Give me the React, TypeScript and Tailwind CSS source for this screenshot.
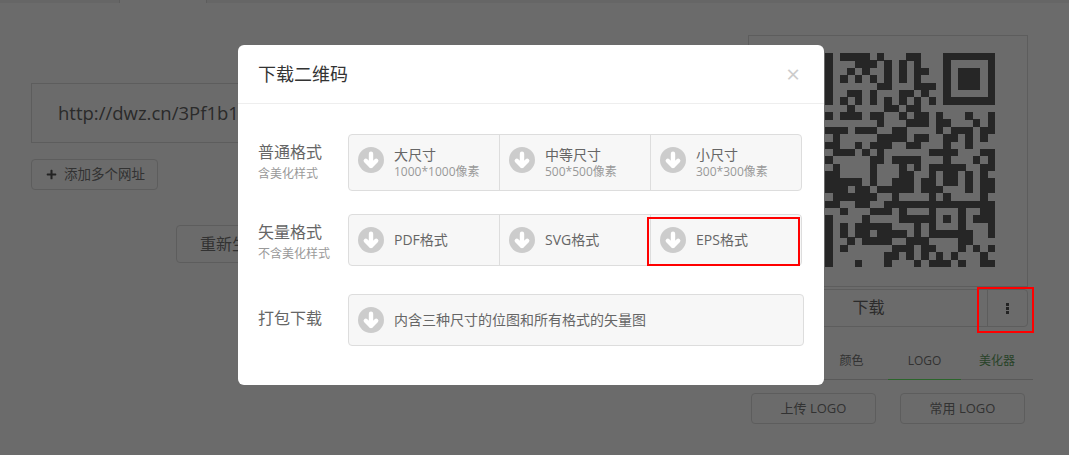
import React from 'react';
import { FaPlus } from 'react-icons/fa';

// qr rows: dark column numbers, the first six columns sit behind the modal
const qrRows: number[][] = [
  [6, 8, 9, 10, 11, 13, 17, 18],
  [6, 10, 11, 12, 14, 16, 18],
  [6, 9, 11, 14, 16, 18, 19],
  [6, 8, 10, 12, 14, 16, 18],
  [6, 13, 14, 18, 19, 20],
  [6, 9, 10, 12, 16, 17, 19],
  [6, 8, 10, 12, 14, 16, 18, 20],
  [9, 14, 15, 17, 18],
  [6, 8, 9, 10, 12, 13, 16, 18, 19, 21, 25, 28],
  [13, 17, 18, 19, 21, 22, 26, 28],
  [6, 7, 8, 10, 11, 12, 15, 16, 21, 23, 24, 25, 27, 28],
  [7, 13, 14, 15, 16, 18, 19, 22, 23, 25, 27],
  [6, 7, 10, 12, 13, 14, 17, 18, 22, 25],
  [7, 8, 9, 11, 13, 20, 21, 22, 23, 27, 28],
  [6, 12, 13, 15, 16, 17, 18, 22, 26, 28],
  [7, 12, 16, 18, 20, 21, 22, 23, 24, 27, 28],
  [6, 7, 12, 16, 17, 20, 22, 23, 25, 27],
  [6, 7, 8, 9, 10, 12, 15, 16, 17, 19, 20, 22, 23, 25, 27, 28],
  [6, 7, 8, 10, 11, 13, 14, 15, 16, 17, 19, 20, 21, 25, 27, 28],
  [7, 8, 9, 10, 11, 12, 15, 20, 22, 27],
  [6, 7, 10, 11, 14, 15, 16, 17, 18, 19, 20, 21, 22, 23, 24, 25, 26, 27, 28],
  [8, 12, 13, 14, 16, 20, 24, 27, 28],
  [6, 11, 16, 17, 18, 19, 20, 22, 24, 26, 27, 28],
  [6, 8, 10, 11, 12, 13, 14, 18, 20, 24, 28],
  [6, 8, 10, 11, 13, 14, 15, 16, 18, 20, 21, 22, 23, 24, 25, 28],
  [6, 9, 11, 12, 13, 14, 17, 18, 19, 24, 25],
  [6, 8, 15, 16, 17, 19, 20, 24, 26, 28],
  [6, 14, 15, 17, 19, 21, 23, 27],
  [6, 10, 14, 18, 20, 21, 22, 24, 27, 28],
];

const QrCode = () => (
  <svg viewBox="0 0 29 29" className="w-[214px] h-[214px]" shapeRendering="crispEdges">
    {qrRows.map((cols, r) =>
      cols.map((c) => <rect key={`${r}-${c}`} x={c} y={r} width={1.02} height={1.02} fill="#5c5c5c" />)
    )}
    {/* top right finder */}
    <path d="M22 0h7v7h-7zM23 1v5h5v-5z" fill="#5c5c5c" fillRule="evenodd" />
    <rect x={24} y={2} width={3} height={3} fill="#5c5c5c" />
  </svg>
);

const DownIcon = () => (
  <svg viewBox="0 0 26 26" className="w-[26px] h-[26px] shrink-0">
    <circle cx="13" cy="13" r="13" fill="#ccc" />
    <path
      d="M13 6.8V19M7.8 13.8L13 19l5.2-5.2"
      fill="none"
      stroke="#fff"
      strokeWidth="4.4"
      strokeLinecap="round"
      strokeLinejoin="round"
    />
  </svg>
);

const Cell = ({ title, sub, last }: { title: string; sub?: string; last?: boolean }) => (
  <div className={`flex-1 flex items-start pl-[9px] pt-3 ${last ? '' : 'border-r border-[#ddd]'}`}>
    <DownIcon />
    <div className={`ml-[10px] flex flex-col ${sub ? '-mt-px' : 'mt-1'}`}>
      <span className="text-sm leading-[18px] text-[#666]">{title}</span>
      {sub && <span className="text-xs leading-4 text-[#999]">{sub}</span>}
    </div>
  </div>
);

const Label = ({ title, sub }: { title: string; sub?: string }) => (
  <div className={`w-[90px] shrink-0 flex flex-col ${sub ? 'pt-[7px]' : 'pt-[13px]'}`}>
    <span className="text-base leading-[22px] text-[#666]">{title}</span>
    {sub && <span className="mt-[2px] text-xs leading-[18px] text-[#999]">{sub}</span>}
  </div>
);

const DownloadModal = () => (
  <div className="absolute left-[238px] top-[45px] w-[586px] h-[340px] bg-white rounded-md">
    <div className="h-[59px] border-b border-[#eee] flex items-center justify-between pl-5 pr-6">
      <h2 className="text-lg text-[#333]">下载二维码</h2>
      <span className="text-[24px] leading-none text-[#ccc]">×</span>
    </div>
    <div className="pl-5 pt-[30px] flex flex-col">
      <div className="flex">
        <Label title="普通格式" sub="含美化样式" />
        <div className="w-[454px] h-[57px] flex bg-[#f7f7f7] border border-[#ddd] rounded">
          <Cell title="大尺寸" sub="1000*1000像素" />
          <Cell title="中等尺寸" sub="500*500像素" />
          <Cell title="小尺寸" sub="300*300像素" last />
        </div>
      </div>
      <div className="flex mt-[23px]">
        <Label title="矢量格式" sub="不含美化样式" />
        <div className="w-[454px] h-[52px] flex bg-[#f7f7f7] border border-[#ddd] rounded">
          <Cell title="PDF格式" />
          <Cell title="SVG格式" />
          <Cell title="EPS格式" last />
        </div>
      </div>
      <div className="flex mt-[28px]">
        <Label title="打包下载" />
        <div className="w-[456px] h-[52px] flex bg-[#f7f7f7] border border-[#ddd] rounded">
          <Cell title="内含三种尺寸的位图和所有格式的矢量图" last />
        </div>
      </div>
    </div>
  </div>
);

export default function App() {
  return (
    <div className="relative w-[1069px] h-[455px] overflow-hidden bg-white font-['Open_Sans','Noto_Sans_CJK_SC',sans-serif]">
      {/* page underneath */}
      <div className="h-[3px] flex bg-[#f2f2f2]">
        <div className="ml-[119px] w-[88px] bg-white border-x border-[#ddd]" />
      </div>
      <div className="flex pl-[31px]">
        <div className="w-[717px] pt-[80px] flex flex-col">
          <div className="w-[660px] h-[60px] border border-[#ddd] flex items-center pl-[26px] text-[18.5px] text-[#666]">
            http://dwz.cn/3Pf1b1
          </div>
          <button className="mt-4 w-[127px] h-[31px] border border-[#ddd] rounded flex items-center justify-center gap-[7px] pl-[2px] text-[13.5px] text-[#777]">
            <FaPlus className="w-[11px] h-[11px] text-[#555]" />
            添加多个网址
          </button>
          <button className="mt-[35px] ml-[145px] w-[150px] h-[38px] border border-[#ddd] rounded pl-[23px] text-left text-base text-[#777]">
            重新生成
          </button>
        </div>
        <div className="w-[280px] pt-[32px] flex flex-col">
          <div className="h-[252px] border border-[#ddd] flex justify-end pt-[17px] pr-[32px]">
            <QrCode />
          </div>
          <div className="h-[38px] flex border border-[#ddd] rounded mt-[2px]">
            <span className="flex-1 flex items-center justify-center pl-[1px] pb-[2px] text-base text-[#666]">下载</span>
            <span className="w-[40px] border-l border-[#ddd] flex flex-col items-center justify-center gap-px">
              <i className="w-[3px] h-[3px] bg-[#555]" />
              <i className="w-[3px] h-[3px] bg-[#555]" />
              <i className="w-[3px] h-[3px] bg-[#555]" />
            </span>
          </div>
          <div className="mt-[15px] h-[38px] w-[285px] flex justify-end border-b border-[#d5d5d5] text-xs text-[#777]">
            <span className="w-[73px] flex items-center justify-center">颜色</span>
            <span className="w-[73px] flex items-center justify-center border-b border-[#66f066] h-[38px]">LOGO</span>
            <span className="w-[72px] flex items-center justify-center text-[#62a062]">美化器</span>
          </div>
          <div className="mt-[13px] flex gap-6 ml-[3px]">
            <span className="w-[125px] h-[31px] border border-[#ddd] rounded flex items-center justify-center text-[13px] text-[#777]">上传 LOGO</span>
            <span className="w-[125px] h-[31px] border border-[#ddd] rounded flex items-center justify-center text-[13px] text-[#777]">常用 LOGO</span>
          </div>
        </div>
      </div>

      {/* backdrop and modal */}
      <div className="absolute inset-0 bg-black/[.58]" />
      <DownloadModal />

      {/* red annotation boxes */}
      <div className="absolute left-[647px] top-[217px] w-[153px] h-[49px] border-2 border-[#f00]" />
      <div className="absolute left-[977px] top-[287px] w-[57px] h-[46px] border-2 border-[#f00]" />
    </div>
  );
}
